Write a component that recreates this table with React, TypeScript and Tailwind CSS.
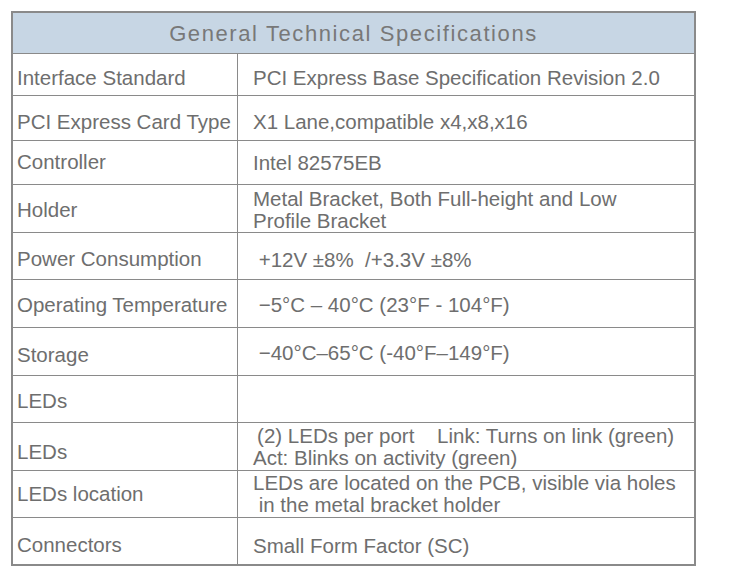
const rows: { label: string; value: string[]; h: string; lp: string; vp: string }[] = [
  { label: "Interface Standard", value: ["PCI Express Base Specification Revision 2.0"], h: "h-[42px]", lp: "pt-[8px]", vp: "pt-[7px]" },
  { label: "PCI Express Card Type", value: ["X1 Lane,compatible x4,x8,x16"], h: "h-[45px]", lp: "pt-[8px]", vp: "pt-[7px]" },
  { label: "Controller", value: ["Intel 82575EB"], h: "h-[44px]", lp: "pt-0", vp: "pt-0" },
  { label: "Holder", value: ["Metal Bracket, Both Full-height and Low", "Profile Bracket"], h: "h-[48px]", lp: "pt-[3px]", vp: "pt-[2px]" },
  { label: "Power Consumption", value: ["\u00a0+12V ±8%\u00a0\u00a0/+3.3V ±8%"], h: "h-[47px]", lp: "pt-[7px]", vp: "pt-[7px]" },
  { label: "Operating Temperature", value: ["\u00a0−5°C – 40°C (23°F - 104°F)"], h: "h-[48px]", lp: "pt-[3px]", vp: "pt-[3px]" },
  { label: "Storage", value: ["\u00a0−40°C–65°C (-40°F–149°F)"], h: "h-[48px]", lp: "pt-[7px]", vp: "pt-[3px]" },
  { label: "LEDs", value: [""], h: "h-[47px]", lp: "pt-[5px]", vp: "pt-[5px]" },
  { label: "LEDs", value: ["\u2009(2) LEDs per port\u00a0\u00a0\u00a0\u00a0Link: Turns on link (green)", "Act: Blinks on activity (green)"], h: "h-[48px]", lp: "pt-[11px]", vp: "pt-[0px]" },
  { label: "LEDs location", value: ["LEDs are located on the PCB, visible via holes", "\u00a0in the metal bracket holder"], h: "h-[47px]", lp: "pt-[0px]", vp: "pt-[0px]" },
  { label: "Connectors", value: ["Small Form Factor (SC)"], h: "h-[46px]", lp: "pt-[9px]", vp: "pt-[9px]" },
];

export default function App() {
  return (
    <div className="w-[730px] h-[579px] bg-white pt-[11px] pl-[11px] font-['Liberation_Sans','Noto_Sans_CJK_SC',sans-serif] text-[#6e6e6e]">
      <div className="w-[685px] border-2 border-[#8a8a8a]">
        <div className="h-[41px] bg-[#c7d6e4] border-b border-[#8a8a8a] flex items-center justify-center text-[22px] tracking-[1.6px] text-[#787878]">
          General Technical Specifications
        </div>
        {rows.map((r, i) => (
          <div
            key={i}
            className={`grid grid-cols-[225px_1fr] ${r.h} ${i < rows.length - 1 ? "border-b border-[#8a8a8a]" : ""}`}
          >
            <div className={`border-r border-[#8a8a8a] flex items-center pl-[4px] ${r.lp} text-[20.5px] whitespace-nowrap`}>
              {r.label}
            </div>
            <div className={`flex flex-col justify-center pl-[15px] ${r.vp} text-[20.5px] leading-[22px] whitespace-pre`}>
              {r.value.map((v, j) => (
                <div key={j}>{v}</div>
              ))}
            </div>
          </div>
        ))}
      </div>
    </div>
  );
}
